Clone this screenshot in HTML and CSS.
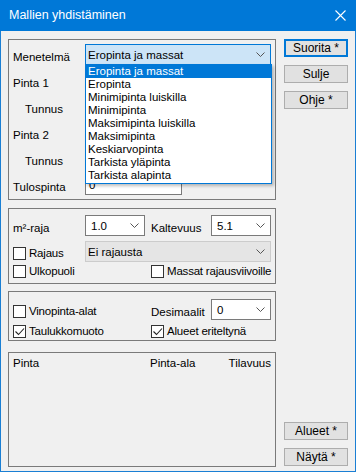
FILE: index.html
```html
<!DOCTYPE html>
<html lang="fi">
<head>
  <meta charset="UTF-8">
  <title>Mallien yhdistäminen</title>
  <link rel="stylesheet" href="styles.css">
</head>
<body>
  <div class="window">
    <div class="titlebar">
      <span class="title">Mallien yhdistäminen</span>
      <svg class="close" width="11" height="11" viewBox="0 0 11 11">
        <path d="M0.5 0.5 L10.5 10.5 M10.5 0.5 L0.5 10.5" stroke="#fff" stroke-width="1.1" fill="none"/>
      </svg>
    </div>

    <div class="client">
      <div class="main">
        <!-- method and surfaces -->
        <div class="group g1">
          <div class="row">
            <span class="lbl">Menetelmä</span>
            <div class="combo focus wide"><span class="val">Eropinta ja massat</span><svg class="chev" width="9" height="5"><polyline points="0.5,0.5 4.5,4.5 8.5,0.5" fill="none" stroke="#555"/></svg></div>
          </div>
          <div class="row">
            <span class="lbl">Pinta 1</span>
            <div class="combo wide"></div>
          </div>
          <div class="row">
            <span class="lbl indent">Tunnus</span>
            <div class="edit short"></div>
          </div>
          <div class="row">
            <span class="lbl">Pinta 2</span>
            <div class="combo wide"></div>
          </div>
          <div class="row">
            <span class="lbl indent">Tunnus</span>
            <div class="edit short"></div>
          </div>
          <div class="row">
            <span class="lbl">Tulospinta</span>
            <div class="edit short"><span class="val">0</span></div>
          </div>
        </div>

        <!-- limits -->
        <div class="group g2">
          <div class="row">
            <span class="lbl">m²-raja</span>
            <div class="combo small"><span class="val edit-val">1.0</span><svg class="chev" width="9" height="5"><polyline points="0.5,0.5 4.5,4.5 8.5,0.5" fill="none" stroke="#555"/></svg></div>
            <span class="lbl mid">Kaltevuus</span>
            <div class="combo small"><span class="val edit-val">5.1</span><svg class="chev" width="9" height="5"><polyline points="0.5,0.5 4.5,4.5 8.5,0.5" fill="none" stroke="#555"/></svg></div>
          </div>
          <div class="row">
            <label class="check first"><span class="box"></span>Rajaus</label>
            <div class="combo wide disabled"><span class="val">Ei rajausta</span><svg class="chev" width="9" height="5"><polyline points="0.5,0.5 4.5,4.5 8.5,0.5" fill="none" stroke="#555"/></svg></div>
          </div>
          <div class="row tight">
            <label class="check first"><span class="box"></span>Ulkopuoli</label>
            <label class="check"><span class="box"></span>Massat rajausviivoille</label>
          </div>
        </div>

        <!-- output options -->
        <div class="group g3">
          <div class="row">
            <label class="check first"><span class="box"></span>Vinopinta-alat</label>
            <span class="lbl">Desimaalit</span>
            <div class="combo small"><span class="val edit-val">0</span><svg class="chev" width="9" height="5"><polyline points="0.5,0.5 4.5,4.5 8.5,0.5" fill="none" stroke="#555"/></svg></div>
          </div>
          <div class="row tight">
            <label class="check first"><span class="box"><svg width="11" height="11"><polyline points="1.5,5.5 4.5,8.5 10,2.5" fill="none" stroke="#222" stroke-width="1.1"/></svg></span>Taulukkomuoto</label>
            <label class="check"><span class="box"><svg width="11" height="11"><polyline points="1.5,5.5 4.5,8.5 10,2.5" fill="none" stroke="#222" stroke-width="1.1"/></svg></span>Alueet eriteltynä</label>
          </div>
        </div>

        <!-- results -->
        <div class="group g4">
          <div class="list-head">
            <span class="col-name">Pinta</span>
            <span class="col-area">Pinta-ala</span>
            <span class="col-vol">Tilavuus</span>
          </div>
        </div>
      </div>

      <div class="side">
        <div class="btns">
          <button class="btn default">Suorita *</button>
          <button class="btn">Sulje</button>
          <button class="btn">Ohje *</button>
        </div>
        <div class="btns">
          <button class="btn">Alueet *</button>
          <button class="btn">Näytä *</button>
        </div>
      </div>
    </div>

    <!-- open list of the method combo -->
    <ul class="dropdown">
      <li class="sel">Eropinta ja massat</li>
      <li>Eropinta</li>
      <li>Minimipinta luiskilla</li>
      <li>Minimipinta</li>
      <li>Maksimipinta luiskilla</li>
      <li>Maksimipinta</li>
      <li>Keskiarvopinta</li>
      <li>Tarkista yläpinta</li>
      <li>Tarkista alapinta</li>
    </ul>
  </div>
</body>
</html>
```

FILE: styles.css
```css
body {
  margin: 0;
  padding: 0;
  font-family: "Liberation Sans", Arial, sans-serif;
  font-size: 11.5px;
  color: #000;
  background-color: #f0f0f0;
}

.window {
  position: relative;
  width: 356px;
  height: 472px;
  box-sizing: border-box;
  border: 1px solid #1a7fd4;
  border-top: none;
  background-color: #f0f0f0;
}

.titlebar {
  height: 31px;
  margin: 0 -1px;
  background-color: #0078d7;
  display: flex;
  align-items: center;
  justify-content: space-between;
  padding: 0 10px 0 9px;
  color: #fff;
}

.title {
  font-size: 12.5px;
  padding-bottom: 1px;
}

.client {
  display: flex;
  padding: 8px 0 0 7px;
}

.main {
  width: 268px;
}

.group {
  box-sizing: border-box;
  border: 1px solid #7a7a7a;
  padding: 0 4px;
}

.g1 {
  height: 161px;
  padding-top: 4px;
}

.g2 {
  height: 76px;
  margin-top: 8px;
  padding-top: 6px;
}

.g3 {
  height: 50px;
  margin-top: 7px;
  padding-top: 7px;
}

.g4 {
  height: 115px;
  margin-top: 11px;
  padding-top: 3px;
}

.row {
  display: flex;
  align-items: flex-start;
  height: 26px;
}

.g2 .row:nth-child(2) {
  height: 23px;
}

.row.tight {
  height: 14px;
  align-items: center;
}

.g3 .row.tight {
  height: 13px;
}

.lbl {
  width: 72px;
  flex-shrink: 0;
  padding-top: 6px;
  line-height: 14px;
}

.lbl.indent {
  padding-left: 12px;
  width: 60px;
}

.lbl.mid {
  width: 60px;
  margin-left: 6px;
}

.g3 .lbl {
  width: 60px;
}

.combo,
.edit {
  position: relative;
  box-sizing: border-box;
  height: 21px;
  background-color: #fff;
  border: 1px solid #7a7a7a;
  display: flex;
  align-items: center;
}

.combo.wide {
  width: 186px;
}

.combo.small {
  width: 60px;
}

.edit.short {
  width: 97px;
}

.combo.focus {
  background-color: #cce4f7;
  border-color: #0078d7;
}

.combo.disabled {
  background-color: #e5e5e5;
  border-color: #cccccc;
}

.val {
  padding-left: 2px;
  white-space: nowrap;
}

.edit .val {
  padding-left: 3px;
}

.edit-val {
  padding-left: 5px;
}

.chev {
  position: absolute;
  right: 5px;
  top: 7px;
}

.check {
  display: flex;
  align-items: center;
  line-height: 13px;
  white-space: nowrap;
  letter-spacing: -0.2px;
}

.check.first {
  width: 138px;
  flex-shrink: 0;
}

.g2 .row:nth-child(2) .check.first {
  width: 72px;
  padding-top: 6px;
}

.g3 .row:first-child .check.first {
  padding-top: 6px;
}

.box {
  width: 13px;
  height: 13px;
  box-sizing: border-box;
  border: 1px solid #333;
  background-color: #fff;
  margin-right: 3px;
  display: flex;
  align-items: center;
  justify-content: center;
}

.list-head {
  display: flex;
  line-height: 14px;
}

.col-name {
  width: 137px;
}

.col-area {
  flex: 1;
}

.col-vol {
  text-align: right;
}

.side {
  width: 64px;
  margin-left: 8px;
  display: flex;
  flex-direction: column;
  justify-content: space-between;
  padding-bottom: 1px;
}

.btns {
  display: flex;
  flex-direction: column;
  gap: 8px;
}

.btn {
  box-sizing: border-box;
  width: 64px;
  height: 18px;
  padding: 0;
  font-family: inherit;
  font-size: 12px;
  color: #000;
  background-color: #e1e1e1;
  border: 1px solid #adadad;
}

.btn.default {
  border: 2px solid #0078d7;
}

.dropdown {
  position: absolute;
  left: 84px;
  top: 64px;
  width: 187px;
  height: 120px;
  box-sizing: border-box;
  margin: 0;
  padding: 0;
  list-style: none;
  background-color: #fff;
  border: 1px solid #0078d7;
  box-shadow: 2px 2px 3px rgba(0, 0, 0, 0.25);
}

.dropdown li {
  height: 13px;
  line-height: 13px;
  padding-left: 2px;
  white-space: nowrap;
}

.dropdown li.sel {
  background-color: #0078d7;
  color: #fff;
}
```
